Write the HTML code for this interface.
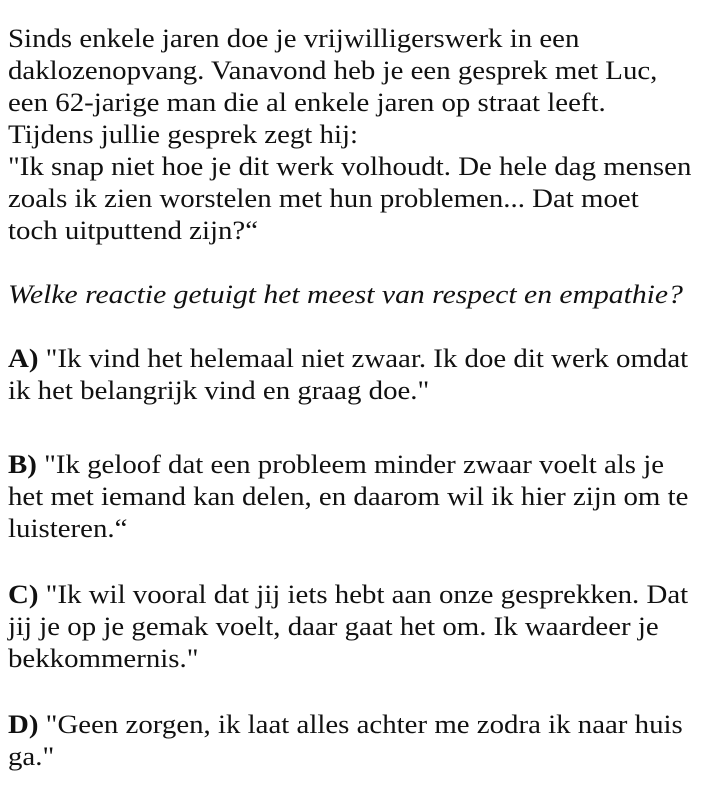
<!DOCTYPE html>
<html><head><meta charset="utf-8">
<style>
html,body{margin:0;padding:0;background:#fff;}
body{width:702px;height:810px;position:relative;overflow:hidden;font-family:"Liberation Serif",serif;font-size:26px;color:#111;}
.l{position:absolute;left:8px;white-space:nowrap;line-height:32px;transform:scaleX(1.11);transform-origin:0 0;}
i{font-style:italic}
</style></head><body>
<div class="l" style="top:23px">Sinds enkele jaren doe je vrijwilligerswerk in een</div>
<div class="l" style="top:55px">daklozenopvang. Vanavond heb je een gesprek met Luc,</div>
<div class="l" style="top:87px">een 62-jarige man die al enkele jaren op straat leeft.</div>
<div class="l" style="top:119px">Tijdens jullie gesprek zegt hij:</div>
<div class="l" style="top:151px">"Ik snap niet hoe je dit werk volhoudt. De hele dag mensen</div>
<div class="l" style="top:183px">zoals ik zien worstelen met hun problemen... Dat moet</div>
<div class="l" style="top:215px">toch uitputtend zijn?“</div>
<div class="l" style="top:279px;transform:scaleX(1.14)"><i>Welke reactie getuigt het meest van respect en empathie?</i></div>
<div class="l" style="top:343px"><b>A)</b> "Ik vind het helemaal niet zwaar. Ik doe dit werk omdat</div>
<div class="l" style="top:375px">ik het belangrijk vind en graag doe."</div>
<div class="l" style="top:449px"><b>B)</b> "Ik geloof dat een probleem minder zwaar voelt als je</div>
<div class="l" style="top:481px">het met iemand kan delen, en daarom wil ik hier zijn om te</div>
<div class="l" style="top:513px">luisteren.“</div>
<div class="l" style="top:579px"><b>C)</b> "Ik wil vooral dat jij iets hebt aan onze gesprekken. Dat</div>
<div class="l" style="top:611px">jij je op je gemak voelt, daar gaat het om. Ik waardeer je</div>
<div class="l" style="top:643px">bekkommernis."</div>
<div class="l" style="top:709px"><b>D)</b> "Geen zorgen, ik laat alles achter me zodra ik naar huis</div>
<div class="l" style="top:741px">ga."</div>
</body></html>
